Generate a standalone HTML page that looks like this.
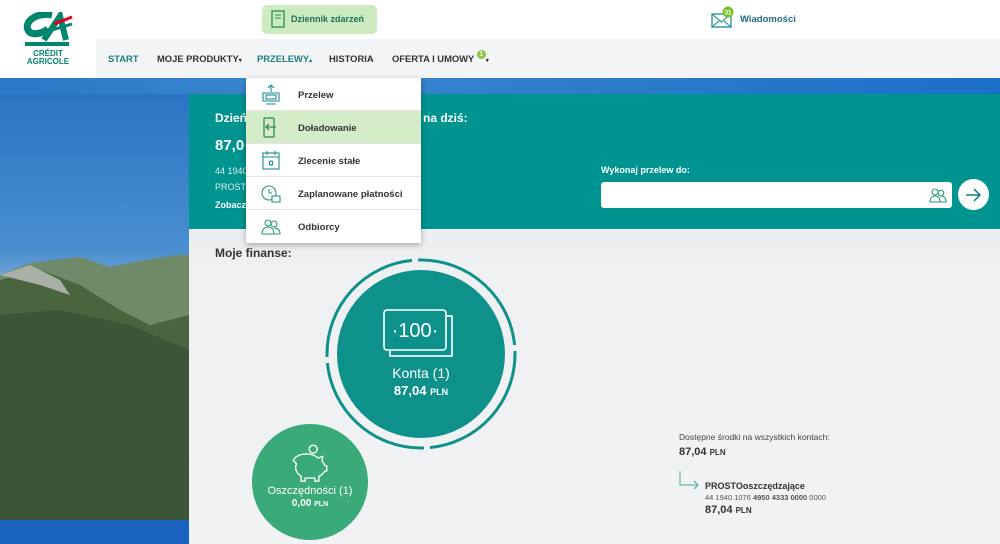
<!DOCTYPE html>
<html><head><meta charset="utf-8"><style>
*{margin:0;padding:0;box-sizing:border-box}
body{width:1000px;height:544px;overflow:hidden;font-family:"Liberation Sans",sans-serif;position:relative;background:#eef0f2}
.abs{position:absolute}
.top{left:0;top:0;width:1000px;height:39px;background:#fff}
.nav{left:96px;top:39px;width:904px;height:39px;background:#f3f4f5}
.logo{left:0;top:0;width:96px;height:78px;background:#fff}
.navi{top:53px;font-size:9.4px;font-weight:bold;color:#333;white-space:nowrap}
.sky{left:0;top:78px;width:1000px;height:16px;background:linear-gradient(90deg,#2a78c6,#3b86cf 30%,#1b6fc6)}
.left{left:0;top:94px;width:189px;height:450px;background:linear-gradient(180deg,#2a74c2 0%,#4a8fd0 35%,#7aa8d4 42%)}
.panel{left:189px;top:94px;width:811px;height:450px;background:linear-gradient(180deg,#e6eaed,#eef0f2 40%,#f1f2f3)}
.teal{left:189px;top:94px;width:811px;height:135px;background:#009490}
.menu{left:246px;top:78px;width:175px;height:165px;background:#fff;box-shadow:0 2px 6px rgba(0,0,0,.3)}
.mi{position:absolute;left:0;width:175px;height:33px;border-bottom:1px solid #e4e4e4;font-size:9.5px;color:#333;font-weight:bold}
.mi span{position:absolute;left:52px;top:12px}
.mi svg{position:absolute;left:14px;top:6px}
.w{color:#fff;font-weight:bold}
</style></head><body>
<div class="abs top"></div>
<div class="abs nav"></div>
<div class="abs logo">
<svg class="abs" style="left:22px;top:12px" width="52" height="34" viewBox="0 0 52 34">
<path d="M30 3 C14 0 2 10 6 18 C9 24 20 22 26 17" fill="none" stroke="#00856f" stroke-width="7"/>
<path d="M22 28 L38 4 L44 28" fill="none" stroke="#00856f" stroke-width="6"/>
<path d="M32 12 L50 5" stroke="#e2001a" stroke-width="3"/>
<path d="M30 18 L50 12" stroke="#00856f" stroke-width="3"/>
<rect x="3" y="30" width="44" height="4" fill="#00856f"/>
</svg>
<div class="abs" style="left:25px;top:50px;font-size:8px;line-height:8px;color:#00856f;font-weight:bold;text-align:center;width:46px">CRÉDIT<br>AGRICOLE</div>
</div>
<div class="abs" style="left:262px;top:5px;width:115px;height:29px;background:#cdebc0;border-radius:5px"></div>
<svg class="abs" style="left:271px;top:10px" width="14" height="18"><rect x="1" y="1" width="12" height="16" fill="none" stroke="#2a8a5a" stroke-width="1.3"/><path d="M4 5h6M4 8h6" stroke="#2a8a5a"/></svg>
<div class="abs" style="left:291px;top:14px;font-size:9px;font-weight:bold;color:#1f6e55">Dziennik zdarzeń</div>
<svg class="abs" style="left:711px;top:6px" width="24" height="24"><rect x="1" y="8" width="19" height="13" fill="none" stroke="#1a8d95" stroke-width="1.3"/><path d="M1 8l9.5 8 9.5-8M1 21l7-6M20 21l-7-6" fill="none" stroke="#1a8d95" stroke-width="1.1"/><circle cx="17" cy="6" r="5.5" fill="#7cbf2b"/><text x="17" y="8.5" font-size="6" fill="#fff" text-anchor="middle" font-weight="bold" font-family="Liberation Sans">31</text></svg>
<div class="abs" style="left:740px;top:14px;font-size:9.5px;font-weight:bold;color:#1f6e85">Wiadomości</div>
<div class="abs navi" style="left:108px;color:#1f8080">START</div>
<div class="abs navi" style="left:157px">MOJE PRODUKTY<span style="font-size:6px">▾</span></div>
<div class="abs navi" style="left:257px;color:#1f8080">PRZELEWY<span style="font-size:6px">▴</span></div>
<div class="abs navi" style="left:329px">HISTORIA</div>
<div class="abs navi" style="left:392px">OFERTA I UMOWY <span style="display:inline-block;width:9px;height:9px;border-radius:50%;background:#8cc63f;color:#fff;font-size:7px;text-align:center;line-height:9px;vertical-align:top;margin-top:-3px">1</span><span style="font-size:6px">▾</span></div>
<div class="abs sky"></div>
<div class="abs left"></div>
<svg class="abs" style="left:0;top:255px" width="189" height="289"><path d="M0 20 L30 8 L80 2 L110 12 L140 6 L189 -2 L189 289 L0 289Z" fill="#6f8a68"/><path d="M0 25 L40 15 L80 30 L120 55 L150 70 L189 60 L189 289 L0 289Z" fill="#4a6440"/><path d="M0 60 L60 55 L130 70 L189 95 L189 289 L0 289Z" fill="#3a5636"/><path d="M0 20 L30 10 L60 25 L70 40 L40 30Z" fill="#a8b0a8"/><rect x="0" y="265" width="189" height="24" fill="#1a62bf"/></svg>
<div class="abs panel"></div>
<div class="abs teal"></div>
<div class="abs w" style="left:215px;top:111px;font-size:12px">Dzień</div>
<div class="abs w" style="left:423px;top:111px;font-size:12px">na dziś:</div>
<div class="abs w" style="left:215px;top:137px;font-size:15px">87,0</div>
<div class="abs" style="left:215px;top:166px;font-size:9px;color:#d8efee">44 1940</div>
<div class="abs" style="left:215px;top:182px;font-size:9px;color:#d8efee">PROST</div>
<div class="abs w" style="left:215px;top:200px;font-size:9px">Zobacz</div>
<div class="abs w" style="left:601px;top:165px;font-size:9px">Wykonaj przelew do:</div>
<div class="abs" style="left:601px;top:182px;width:351px;height:26px;background:#fff;border-radius:3px"></div>
<svg class="abs" style="left:929px;top:186px" width="18" height="18" fill="none" stroke="#2a9a7a" stroke-width="1.1"><circle cx="6" cy="6" r="3"/><circle cx="12" cy="7" r="2.8"/><path d="M1 16c0-4 2-6 5-6s5 2 5 6zM11 16h6c0-4-2-6-5-6"/></svg>
<div class="abs" style="left:958px;top:179px;width:31px;height:31px;border-radius:50%;background:#fff"></div>
<svg class="abs" style="left:964px;top:186px" width="18" height="18" fill="none" stroke="#0f7f7d" stroke-width="1.5"><path d="M2 9h14M10 3l6 6-6 6"/></svg>
<div class="abs" style="left:215px;top:246px;font-size:12px;font-weight:bold;color:#333">Moje finanse:</div>
<svg class="abs" style="left:320px;top:254px" width="200" height="200">
<circle cx="101" cy="100" r="94" fill="none" stroke="#0f918b" stroke-width="3" stroke-dasharray="141.6 6" stroke-dashoffset="3" transform="rotate(-90 101 100)"/>
<circle cx="101" cy="100" r="84" fill="#0f918b"/>
<rect x="70" y="62" width="62" height="40" fill="none" stroke="#fff" stroke-width="1.6"/>
<rect x="64" y="56" width="62" height="40" rx="3" fill="#0f918b" stroke="#fff" stroke-width="1.6"/>
<text x="95" y="83" font-size="20" fill="#fff" text-anchor="middle" font-family="Liberation Sans">·100·</text>
<text x="101" y="124" font-size="14" fill="#fff" text-anchor="middle" font-family="Liberation Sans">Konta (1)</text>
<text x="101" y="141" font-size="13" fill="#fff" text-anchor="middle" font-weight="bold" font-family="Liberation Sans">87,04 <tspan font-size="9">PLN</tspan></text>
</svg>
<svg class="abs" style="left:252px;top:424px" width="116" height="120">
<circle cx="58" cy="58" r="58" fill="#3aaa78"/>
<g transform="translate(58 38) scale(0.8) translate(-58 -38)">
<path d="M40 32c8-6 22-5 28 1l6-2-1 6c2 2 3 4 3 5l3 1v6l-3 1c-2 3-4 5-7 6v6h-5v-4h-12v4h-5v-6c-4-3-7-7-7-11 0-3 1-4 1-5l-4-4z" fill="none" stroke="#fff" stroke-width="1.7"/>
<circle cx="62" cy="22" r="5" fill="none" stroke="#fff" stroke-width="1.7"/>
</g>
<text x="58" y="70" font-size="11" fill="#fff" text-anchor="middle" font-family="Liberation Sans">Oszczędności (1)</text>
<text x="58" y="82" font-size="10" fill="#fff" text-anchor="middle" font-weight="bold" font-family="Liberation Sans">0,00 <tspan font-size="7">PLN</tspan></text>
</svg>
<div class="abs" style="left:679px;top:432px;font-size:8.5px;color:#444">Dostępne środki na wszystkich kontach:</div>
<div class="abs" style="left:679px;top:446px;font-size:11px;font-weight:bold;color:#333">87,04 <span style="font-size:8px">PLN</span></div>
<svg class="abs" style="left:679px;top:470px" width="22" height="22" fill="none" stroke="#4aa8a0" stroke-width="1"><path d="M1 1v14h18M15 11l4 4-4 4"/></svg>
<div class="abs" style="left:705px;top:481px;font-size:9px;font-weight:bold;color:#333">PROSTOoszczędzające</div>
<div class="abs" style="left:705px;top:493px;font-size:7.5px;color:#555">44 1940 1076 <b>4950 4333 0000</b> 0000</div>
<div class="abs" style="left:705px;top:504px;font-size:11px;font-weight:bold;color:#333">87,04 <span style="font-size:8px">PLN</span></div>
<div class="abs menu">
<div class="mi" style="top:0"><svg width="22" height="22" fill="none" stroke="#1a8d95" stroke-width="1.1"><path d="M11 1v7M8 4l3-3 3 3M3 9h16v8H3zM6 20h10"/><rect x="6" y="11" width="10" height="4"/></svg><span>Przelew</span></div>
<div class="mi" style="top:33px;background:#d5ecc8"><svg width="22" height="22" fill="none" stroke="#2a8a5a" stroke-width="1.3"><rect x="4" y="1" width="10" height="19" rx="1"/><path d="M9 7l-3 3 3 3M6 10h10"/></svg><span>Doładowanie</span></div>
<div class="mi" style="top:66px"><svg width="22" height="22" fill="none" stroke="#1a8d95" stroke-width="1.1"><rect x="3" y="3" width="16" height="16"/><path d="M3 7h16M7 1v4M15 1v4M9 12a2 2 0 1 1 0 2M13 14a2 2 0 1 1 0-2"/></svg><span>Zlecenie stałe</span></div>
<div class="mi" style="top:99px"><svg width="22" height="22" fill="none" stroke="#2a9a7a" stroke-width="1.1"><circle cx="9" cy="10" r="7"/><path d="M9 6v4h3"/><rect x="12" y="13" width="8" height="6" fill="#fff"/></svg><span>Zaplanowane płatności</span></div>
<div class="mi" style="top:132px;border:none"><svg width="22" height="22" fill="none" stroke="#2a9a7a" stroke-width="1.1"><circle cx="8" cy="7" r="3"/><circle cx="14" cy="8" r="3"/><path d="M2 18c0-5 3-7 6-7s6 2 6 7zM13 18h7c0-4-2-6-6-6"/></svg><span>Odbiorcy</span></div>
</div>
</body></html>
